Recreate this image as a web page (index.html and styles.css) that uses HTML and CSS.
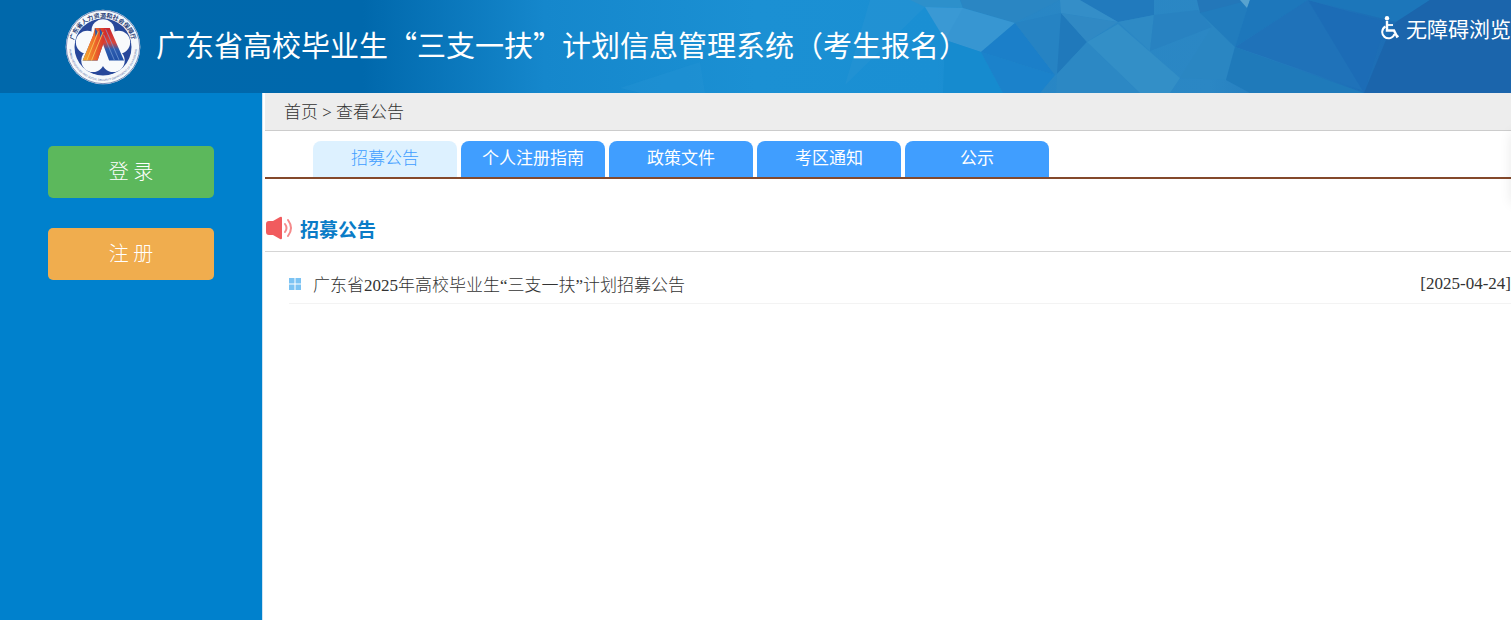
FILE: index.html
```html
<!DOCTYPE html>
<html lang="zh-CN">
<head>
  <meta charset="UTF-8">
  <meta name="viewport" content="width=device-width, initial-scale=1.0">
  <link rel="stylesheet" href="styles.css">
  <title>广东省高校毕业生“三支一扶”计划信息管理系统</title>
</head>
<body>
<!-- 顶部 -->
<header class="header">
  <svg class="header-bg" viewBox="0 0 1511 93" preserveAspectRatio="none" aria-hidden="true">
    <defs>
      <linearGradient id="sky" x1="0" x2="1" y1="0" y2="0">
        <stop offset="0" stop-color="#0068ab"/>
        <stop offset="0.24" stop-color="#0068ac"/>
        <stop offset="0.36" stop-color="#1587cc"/>
        <stop offset="0.5" stop-color="#1b90d3"/>
        <stop offset="0.62" stop-color="#1a8fd3"/>
        <stop offset="0.68" stop-color="#2886c5"/>
        <stop offset="0.8" stop-color="#2b87c4"/>
        <stop offset="0.9" stop-color="#1d6fb7"/>
        <stop offset="1" stop-color="#1c65aa"/>
      </linearGradient>
    </defs>
    <rect width="1511" height="93" fill="url(#sky)"/>
    <polygon points="870,0 920,0 925,7 845,85" fill="#2893d3" opacity=".5"/>
    <polygon points="620,88 700,62 705,93 640,93" fill="#2c99d8" opacity=".25"/>
    <polygon points="910,0 960,0 963,8 925,7" fill="#2d90cb"/>
    <polygon points="960,0 1060,0 1015,23 963,8" fill="#2a86c3"/>
    <polygon points="925,7 963,8 970,36 945,40" fill="#3a99d4"/>
    <polygon points="963,8 1015,23 981,52 945,40" fill="#3796d2"/>
    <polygon points="945,40 981,52 1003,93 943,93" fill="#168bcf"/>
    <polygon points="1015,23 1055,75 981,52" fill="#1b7fc9"/>
    <polygon points="981,52 1055,75 1040,93 1003,93" fill="#1b82cb"/>
    <polygon points="1015,23 1061,13 1061,70 1055,75" fill="#2683c3"/>
    <polygon points="1061,13 1087,42 1057,74" fill="#2079bb"/>
    <polygon points="1087,42 1140,93 1056,93 1057,74" fill="#2c88c4"/>
    <polygon points="1061,13 1118,22 1087,42" fill="#3089c4"/>
    <polygon points="1078,0 1154,0 1154,15 1118,22" fill="#217abd"/>
    <polygon points="1060,0 1080,0 1118,22 1061,13" fill="#348ec8"/>
    <polygon points="1118,24 1180,78 1170,93 1140,93 1087,42" fill="#338fc7"/>
    <polygon points="1118,22 1154,15 1150,51" fill="#2e8ac5"/>
    <polygon points="1154,15 1198,10 1212,27 1150,51" fill="#2882c1"/>
    <polygon points="1197,0 1250,0 1235,10 1200,13" fill="#2377b9"/>
    <polygon points="1200,13 1235,47 1226,80 1180,78 1212,27" fill="#2a86c2"/>
    <polygon points="1200,13 1250,0 1235,47" fill="#217cbd"/>
    <polygon points="1240,0 1250,0 1247,8" fill="#58a3cf"/>
    <polygon points="1250,0 1308,0 1235,47" fill="#1d77bb"/>
    <polygon points="1308,0 1364,91 1235,47" fill="#1f72b9"/>
    <polygon points="1235,47 1364,93 1250,93 1226,80" fill="#1f7aba"/>
    <polygon points="1308,0 1386,22 1364,93" fill="#1c6cb6"/>
    <polygon points="1308,0 1430,0 1396,22" fill="#1c76ba"/>
    <polygon points="1396,22 1430,0 1511,0 1511,93 1364,93 1386,40" fill="#1b65ac"/>
  </svg>

  <svg class="logo" viewBox="0 0 112 112" role="img" aria-label="广东省人力资源和社会保障厅">
    <defs>
      <path id="ringTop" d="M17 77 A44 44 0 1 1 95 77"/>
      <path id="ringBottom" d="M6 56 A50 50 0 0 0 106 56"/>
      <linearGradient id="legLeft" x1="0" x2="1" y1="0" y2="0">
        <stop offset="0" stop-color="#f7b02c"/>
        <stop offset="0.5" stop-color="#ee6a2a"/>
        <stop offset="1" stop-color="#d3282b"/>
      </linearGradient>
      <linearGradient id="legRight" x1="0" x2="0" y1="0" y2="1">
        <stop offset="0" stop-color="#c9252f"/>
        <stop offset="0.45" stop-color="#d9443a"/>
        <stop offset="0.65" stop-color="#2d5cae"/>
        <stop offset="1" stop-color="#1f4fa5"/>
      </linearGradient>
    </defs>
    <circle cx="56" cy="56" r="55" fill="#f5f8fb"/>
    <circle cx="56" cy="56" r="54" fill="none" stroke="#3c5b9a" stroke-width="1"/>
    <circle cx="56" cy="56" r="42" fill="#27479a"/>
    <g fill="#f8fafc">
      <circle cx="56" cy="32" r="17"/>
      <circle cx="33" cy="49" r="17"/>
      <circle cx="79" cy="49" r="17"/>
      <circle cx="41" cy="76" r="17"/>
      <circle cx="71" cy="76" r="17"/>
      <circle cx="56" cy="56" r="20"/>
    </g>
    <path d="M46 28h20l21 48H65L56 52 48 76H26z" fill="url(#legRight)"/>
    <path d="M44 28h14l3 10-13 38H26l15-36z" fill="url(#legLeft)"/>
    <path d="M44 28l5 7-4 6zM51 28l5 8-4 6z" fill="#2c55a6"/>
    <path d="M49 33L32 76M56 34L39 76" stroke="#f9cf5b" stroke-width="1.200"/>
    <path d="M60 30L80 76M57 38L73 76" stroke="#7fa3d8" stroke-width="1"/>
    <text class="ring-name"><textPath href="#ringTop" startOffset="50%" text-anchor="middle">广东省人力资源和社会保障厅</textPath></text>
    <text class="ring-latin"><textPath href="#ringBottom" startOffset="50%" text-anchor="middle">HUMAN RESOURCES AND SOCIAL SECURITY DEPARTMENT OF GUANGDONG</textPath></text>
  </svg>
  <h1 class="title">广东省高校毕业生“三支一扶”计划信息管理系统（考生报名）</h1>

  <a class="barrier-free" href="#">
    <svg class="wheelchair" viewBox="0 0 18 24" aria-hidden="true">
      <circle cx="6" cy="2.2" r="2.2" fill="#fff"/>
      <path d="M6 5v9.500h7l3 6 1.500-.800" fill="none" stroke="#fff" stroke-width="2.400"/>
      <path d="M6 9h6" stroke="#fff" stroke-width="1.800"/>
      <path d="M4.500 10.500a6.300 6.300 0 1 0 9 7.500" fill="none" stroke="#fff" stroke-width="2"/>
    </svg>
    <span>无障碍浏览</span>
  </a>
</header>

<div class="wrap">
  <!-- 左侧登录注册 -->
  <aside class="side">
    <button class="btn btn-login" type="button">登 录</button>
    <button class="btn btn-reg" type="button">注 册</button>
  </aside>

  <!-- 右侧内容 -->
  <main class="main">
    <nav class="crumb"><a href="#">首页</a> &gt; <a href="#">查看公告</a></nav>

    <nav class="tabs">
      <a class="tab active" href="#">招募公告</a>
      <a class="tab" href="#">个人注册指南</a>
      <a class="tab" href="#">政策文件</a>
      <a class="tab" href="#">考区通知</a>
      <a class="tab" href="#">公示</a>
    </nav>

    <section class="notice">
      <h2 class="notice-title">
        <svg class="horn" viewBox="0 0 28 24" aria-hidden="true">
          <path d="M4 5h4l7-4q2-.800 2 1v20q0 1.800-2 1l-7-4H4q-3 0-3-3V8q0-3 3-3z" fill="#f15b5e"/>
          <path d="M20 8q3 4 0 8M23 4q6 8 0 16" fill="none" stroke="#f58a8b" stroke-width="2" stroke-linecap="round"/>
        </svg>
        招募公告
      </h2>
      <ul class="list">
        <li class="item">
          <svg class="dot" viewBox="0 0 12 12" aria-hidden="true">
            <path d="M0 0h5.500v5.500H0zM6.500 0H12v5.500H6.500zM0 6.500h5.500V12H0zM6.500 6.500H12V12H6.500z" fill="#7cc3f3"/>
          </svg>
          <a class="item-link" href="#">广东省2025年高校毕业生“三支一扶”计划招募公告</a>
          <span class="date">[2025-04-24]</span>
        </li>
      </ul>
    </section>
  </main>
</div>

<!-- 右侧浮动栏，收起时只露出阴影 -->
<div class="float-bar"></div>
</body>
</html>
```

FILE: styles.css
```css
* {
  box-sizing: border-box;
}

body {
  margin: 0;
  min-height: 100vh;
  display: flex;
  flex-direction: column;
  overflow-x: hidden;
  font-family: "Liberation Serif", "Noto Sans CJK SC", serif;
  font-size: 17px;
  font-weight: 300;
  color: #333;
  background-color: #fff;
}

a {
  color: inherit;
  text-decoration: none;
}

/* 顶部 */
.header {
  position: relative;
  display: flex;
  align-items: center;
  height: 93px;
  padding-left: 65px;
  overflow: hidden;
  color: #fff;
  font-family: "Noto Sans CJK SC", sans-serif;
}

.header-bg {
  position: absolute; /* 背景铺满顶部 */
  top: 0;
  left: 0;
  width: 100%;
  height: 100%;
  z-index: -1;
}

.logo {
  flex: none;
  width: 76px;
  height: 76px;
}

.ring-name {
  font-size: 9px;
  font-weight: bold;
  fill: #2b3f78;
}

.ring-latin {
  font-family: "Liberation Sans", sans-serif;
  font-size: 4px;
  fill: #4d659c;
}

.title {
  margin: 0 0 0 15px;
  padding-bottom: 6px;
  font-size: 29px;
  font-weight: 400;
  line-height: 44px;
  white-space: nowrap;
}

.barrier-free {
  display: flex;
  align-self: flex-start;
  align-items: center;
  gap: 7px;
  margin-top: 11px;
  margin-left: auto;
  font-size: 21px;
  font-weight: 400;
  line-height: 34px;
  white-space: nowrap;
}

.wheelchair {
  width: 18px;
  height: 24px;
}

.wrap {
  flex: 1;
  display: flex;
}

/* 左侧 */
.side {
  flex: none;
  display: flex;
  flex-direction: column;
  gap: 30px;
  width: 263px;
  padding: 53px 48px 0;
  background-color: #0081cd;
  border-right: 1px solid #cfe3f2;
}

.btn {
  height: 52px;
  padding: 0 0 3px;
  border: 0;
  border-radius: 5px;
  color: #fff;
  font-family: "Noto Sans CJK SC", sans-serif;
  font-size: 20px;
  font-weight: 300;
  cursor: pointer;
}

.btn-login {
  background-color: #5cb85c;
}

.btn-reg {
  background-color: #f0ad4e;
}

/* 右侧 */
.main {
  flex: 1;
  min-width: 0;
  padding-left: 2px;
}

.crumb {
  height: 38px;
  padding-left: 19px;
  line-height: 40px;
  background-color: #ededed;
  border-bottom: 1px solid #ccc;
}

.tabs {
  display: flex;
  gap: 4px;
  padding: 10px 0 0 48px;
  border-bottom: 2px solid #84492b;
}

.tab {
  width: 144px;
  height: 36px;
  line-height: 36px;
  text-align: center;
  font-weight: 400;
  color: #fff;
  background-color: #409eff;
  border-radius: 8px 8px 0 0;
}

.tab.active {
  font-weight: 300;
  color: #409eff;
  background-color: #ddf1ff;
}

.notice {
  padding-top: 26px;
}

.notice-title {
  display: flex;
  align-items: center;
  gap: 7px;
  height: 47px;
  margin: 0;
  color: #0a7cc7;
  font-size: 19px;
  border-bottom: 1px solid #d5d5d5;
}

.horn {
  width: 28px;
  height: 24px;
}

.list {
  margin: 0;
  padding: 12px 0 0 24px;
  list-style: none;
}

.item {
  display: flex;
  align-items: center;
  height: 40px;
  border-bottom: 1px solid #f3f3f3;
}

.dot {
  width: 12px;
  height: 12px;
  margin-right: 12px;
}

.date {
  margin-left: auto;
}

.float-bar {
  position: fixed;
  top: 133px;
  right: -41px;
  width: 40px;
  height: 70px;
  box-shadow: 0 0 12px rgba(0, 0, 0, 0.1);
}
```
